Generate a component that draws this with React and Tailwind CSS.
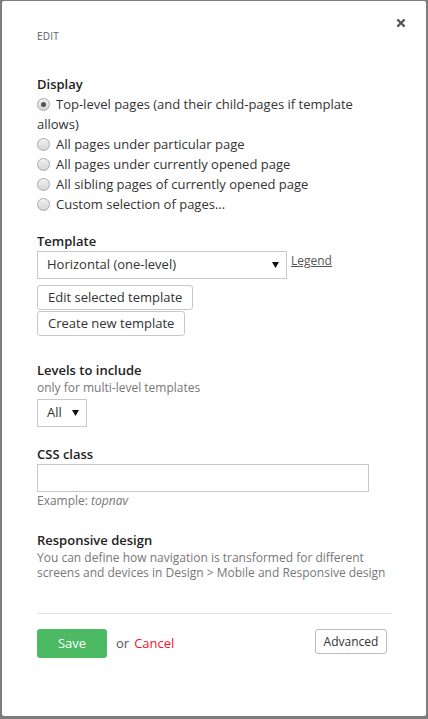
import React from "react";
import { FaTimes } from "react-icons/fa";

function Radio({ checked }) {
  return (
    <span className="relative inline-block align-[-2px] w-[13px] h-[13px] rounded-full border border-[#a9a9a9] bg-gradient-to-b from-[#f2f2f2] to-[#d4d4d4] mr-[6px]">
      {checked && (
        <span className="absolute left-[3px] top-[3px] w-[5px] h-[5px] rounded-full bg-[#555]" />
      )}
    </span>
  );
}

function Arrow() {
  return (
    <svg width="7" height="6" viewBox="0 0 7 6" className="shrink-0">
      <path d="M0 0 H7 L3.5 6 Z" fill="#111" />
    </svg>
  );
}

export default function App() {
  const font = { fontFamily: '"Open Sans", "Noto Sans", sans-serif' };
  const options = [
    "All pages under particular page",
    "All pages under currently opened page",
    "All sibling pages of currently opened page",
    "Custom selection of pages...",
  ];
  return (
    <div className="w-[428px] h-[719px] bg-[#7d7d7d] pl-[2px] pr-[2px] pt-[1px] pb-[3px]" style={font}>
      <div className="relative w-full h-full bg-white rounded-[2px] px-[35px] text-[13px] text-[#333]">
        <button className="absolute right-[19px] top-[16px] text-[#555]">
          <FaTimes size={12} />
        </button>
        <div className="pt-[28px] text-[10px] leading-[14px] text-[#5d5d6b] tracking-[0.2px]">EDIT</div>

        <div className="mt-[31px] w-[356px]">
          <div className="font-semibold leading-[20px] text-[#222]">Display</div>
          <div className="leading-[20px]">
            <label className="block">
              <Radio checked />
              Top-level pages (and their child-pages if template allows)
            </label>
            {options.map((o) => (
              <label key={o} className="block">
                <Radio />
                {o}
              </label>
            ))}
          </div>
        </div>

        <div className="mt-[17px]">
          <div className="font-semibold leading-[20px] text-[#222]">Template</div>
          <div className="flex items-start">
            <div className="w-[250px] h-[28px] border border-[#c8c8c8] flex items-center justify-between pl-[9px] pr-[7px]">
              <span>Horizontal (one-level)</span>
              <Arrow />
            </div>
            <a className="ml-[4px] mt-[1px] text-[12px] leading-[18px] text-[#555] underline">Legend</a>
          </div>
          <div className="mt-[6px] flex flex-col items-start gap-[1px]">
            <button className="h-[25px] px-[10px] border border-[#c8c8c8] rounded-[3px] leading-[23px] text-[#333]">
              Edit selected template
            </button>
            <button className="h-[25px] px-[10px] border border-[#c8c8c8] rounded-[3px] leading-[23px] text-[#333]">
              Create new template
            </button>
          </div>
        </div>

        <div className="mt-[24px]">
          <div className="font-semibold leading-[20px] text-[#222]">Levels to include</div>
          <div className="text-[12px] leading-[15px] text-[#777]">only for multi-level templates</div>
          <div className="mt-[4px] w-[50px] h-[28px] border border-[#c8c8c8] flex items-center justify-between pl-[9px] pr-[7px]">
            <span>All</span>
            <Arrow />
          </div>
        </div>

        <div className="mt-[17px]">
          <div className="font-semibold leading-[20px] text-[#222]">CSS class</div>
          <div className="w-[332px] h-[28px] border border-[#c8c8c8]" />
          <div className="text-[12px] leading-[18px] text-[#777]">
            Example: <i>topnav</i>
          </div>
        </div>

        <div className="mt-[20px]">
          <div className="font-semibold leading-[20px] text-[#222]">Responsive design</div>
          <div className="text-[12px] leading-[15px] text-[#777]">
            <div>You can define how navigation is transformed for different</div>
            <div>screens and devices in Design &gt; Mobile and Responsive design</div>
          </div>
        </div>

        <div className="mt-[33px] border-t border-[#e3e3e3] w-[355px]" />

        <div className="mt-[15px] flex items-start w-[350px]">
          <button className="w-[70px] h-[29px] bg-[#4cb963] rounded-[3px] text-white text-[13px]">Save</button>
          <span className="ml-[9px] leading-[29px] text-[#555]">or</span>
          <a className="ml-[5px] leading-[29px] text-[#f5142b]">Cancel</a>
          <button className="ml-auto w-[72px] h-[25px] border border-[#bcbcbc] rounded-[3px] text-[12px] text-[#333] leading-[23px]">
            Advanced
          </button>
        </div>
      </div>
    </div>
  );
}
